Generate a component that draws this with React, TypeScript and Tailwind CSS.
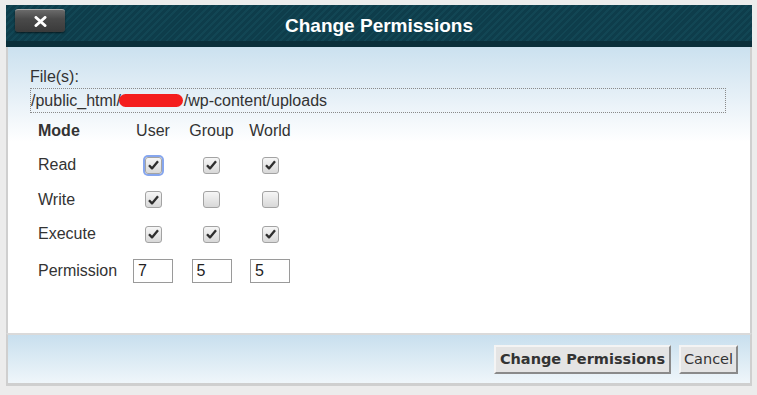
import type { ReactNode } from 'react'

const rows: Array<{ label: string; checks: boolean[] }> = [
  { label: 'Read', checks: [true, true, true] },
  { label: 'Write', checks: [true, false, false] },
  { label: 'Execute', checks: [true, true, true] },
]

const perms = ['7', '5', '5']

function Check({ on, focus }: { on: boolean; focus?: boolean }) {
  return (
    <span
      className={`flex h-[17px] w-[17px] items-center justify-center rounded-[3px] border border-[#a3a3a3] bg-[linear-gradient(to_bottom,#f6f6f6,#d8d8d8)] ${
        focus ? 'shadow-[0_0_0_2px_#86a6ee]' : ''
      }`}
    >
      {on && (
        <svg width="11" height="10" viewBox="0 0 11 10">
          <path d="M1 5.2 L4 8.4 L10 1.2" fill="none" stroke="#2e2e2e" strokeWidth="2.3" strokeLinejoin="round" />
        </svg>
      )}
    </span>
  )
}

function Cell({ children }: { children: ReactNode }) {
  return <div className="flex items-center justify-center">{children}</div>
}

export default function App() {
  return (
    <div className="h-[395px] w-[757px] bg-[#ececec] pl-[6px] pt-[5px] font-['Liberation_Sans',Arial,sans-serif]">
      <div className="flex h-[381px] w-[746px] flex-col">
        {/* title bar */}
        <div className="relative flex h-[42px] items-center justify-center bg-[#0e3d4b] bg-[repeating-linear-gradient(135deg,#0e3d4b_0px,#0e3d4b_3px,#124654_3px,#124654_5px)] shadow-[inset_0_-6px_0_#0a2f3a]">
          <button className="absolute left-[9px] top-[4px] flex h-[23px] w-[50px] items-center justify-center rounded-[3px] border-t border-[#a8a8a8] bg-[linear-gradient(to_bottom,#6a6a6a,#4a4a4a_40%,#3a3a3a)] shadow-[0_1px_2px_rgba(0,0,0,0.6)]">
            <svg width="13" height="11" viewBox="0 0 13 11">
              <path d="M2 1.5 L11 9.5 M11 1.5 L2 9.5" stroke="#ffffff" strokeWidth="3" strokeLinecap="round" />
            </svg>
          </button>
          <h1 className="text-[19px] font-bold text-white">Change Permissions</h1>
        </div>

        {/* body */}
        <div className="flex-1 border-x-2 border-[#cfcfcf] bg-[linear-gradient(to_bottom,#cbe1ef,#e6f0f7_50px,#ffffff_95px)] pl-[22px] pr-[24px] pt-[20px] text-[#333333]">
          <div className="text-[16px] leading-[20px]">File(s):</div>
          <div className="mt-[1px] flex h-[25px] items-center border border-dotted border-[#8a8a8a] text-[16px]">
            <span>/public_html/</span>
            <span className="-ml-[2px] mr-[1px] inline-block h-[13px] w-[64px] rounded-full bg-[#f41d1d]" />
            <span>/wp-content/uploads</span>
          </div>

          <div className="ml-[8px] mt-[1px] grid grid-cols-[86px_58px_59px_58px] text-[16px]">
            <div className="flex h-[34px] items-center font-bold">Mode</div>
            <Cell>User</Cell>
            <Cell>Group</Cell>
            <Cell>World</Cell>
            {rows.map((r, i) => (
              <div key={r.label} className="contents">
                <div className="flex h-[34.5px] items-center">{r.label}</div>
                {r.checks.map((c, j) => (
                  <Cell key={j}>
                    <Check on={c} focus={i === 0 && j === 0} />
                  </Cell>
                ))}
              </div>
            ))}
            <div className="flex h-[38px] items-center">Permission</div>
            {perms.map((p, j) => (
              <Cell key={j}>
                <input
                  readOnly
                  value={p}
                  className="h-[24px] w-[40px] border border-[#9a9a9a] bg-white pl-[4px] text-[16px] text-[#222222] outline-none"
                />
              </Cell>
            ))}
          </div>
        </div>

        {/* footer */}
        <div className="flex h-[53px] items-start justify-end gap-[8px] border-x-2 border-b-[3px] border-t-2 border-[#cfcfcf] border-t-[#dadada] bg-[linear-gradient(to_bottom,#c8dfee,#eff6fa)] pr-[12px] pt-[10px] font-['DejaVu_Sans',Verdana,sans-serif] text-[14.5px] text-[#333333]">
          <button className="h-[29px] w-[177px] border-2 border-b-[#8a8a8a] border-l-[#f4f4f4] border-r-[#8a8a8a] border-t-[#f4f4f4] bg-[#e4e4e4] font-bold">
            Change Permissions
          </button>
          <button className="h-[29px] w-[59px] border-2 border-b-[#8a8a8a] border-l-[#f4f4f4] border-r-[#8a8a8a] border-t-[#f4f4f4] bg-[#e4e4e4]">
            Cancel
          </button>
        </div>
      </div>
    </div>
  )
}
